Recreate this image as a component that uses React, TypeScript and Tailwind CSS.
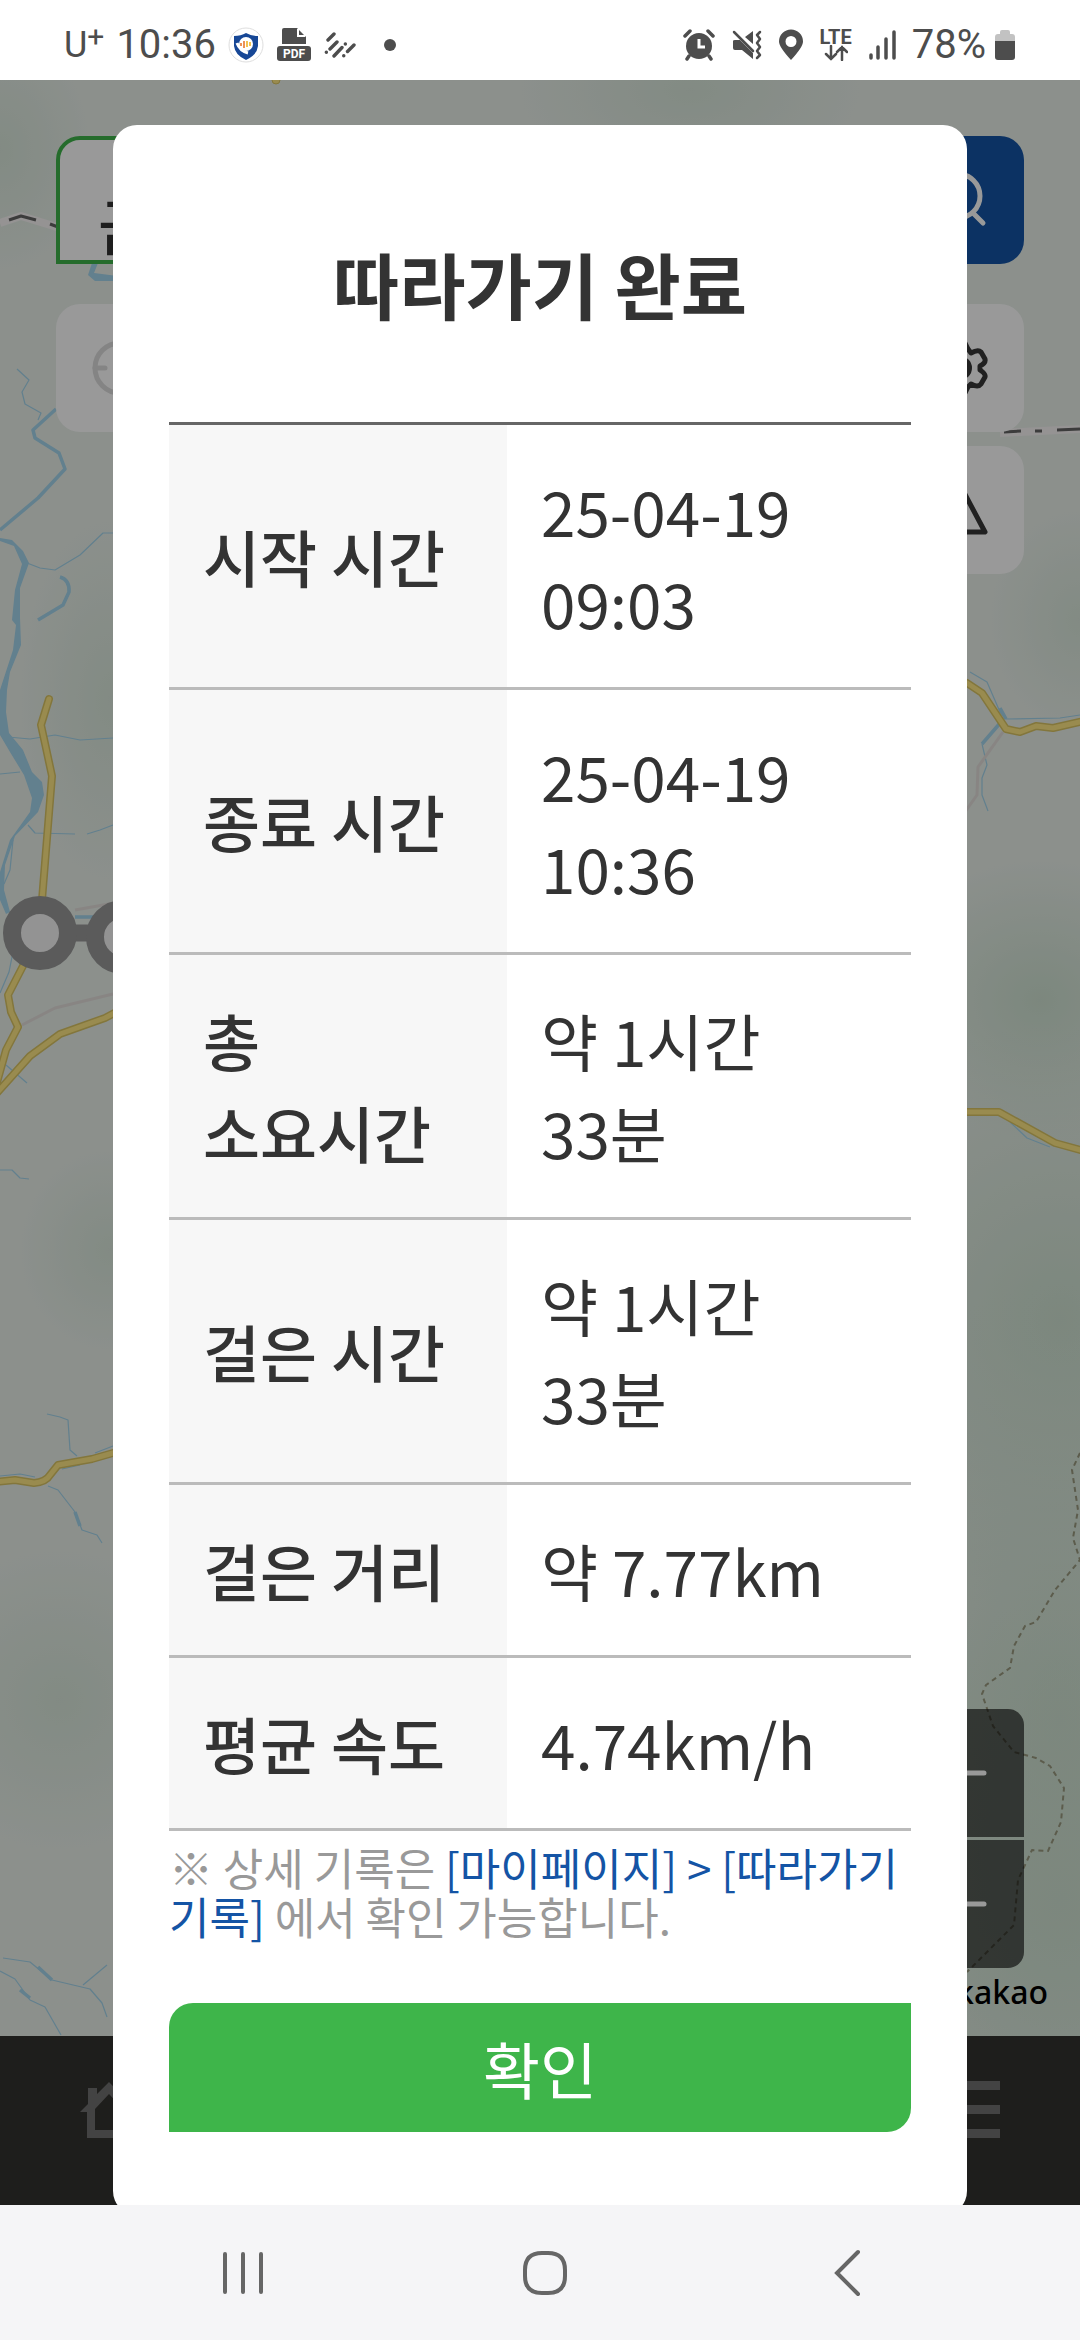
import React from 'react';

const RECORDS = [
    { label: '시작 시간', value: '25-04-19 09:03' },
    { label: '종료 시간', value: '25-04-19 10:36' },
    { label: '총 소요시간', value: '약 1시간 33분' },
    { label: '걸은 시간', value: '약 1시간 33분' },
    { label: '걸은 거리', value: '약 7.77km' },
    { label: '평균 속도', value: '4.74km/h' },
];

// Map geometry, in the coordinates of the map drawing
const STREAMS = [
    'M17 369L29 380L22 392L25 404L41 413L38 420',
    'M27 563L40 568L55 570L80 555L103 533L113 533',
    'M8 737L30 739L55 735L80 740L113 738',
    'M28 825L35 833L75 834M87 834L100 830L113 825',
    'M13 952L9 972L0 993M0 774L20 772M13 840L10 870L4 884',
    'M0 1170L12 1170L20 1178L29 1179M6 1065L27 1083',
    'M47 1414L60 1417L68 1420L70 1450L77 1456M0 1476L20 1474L35 1477M62 1469L80 1465M95 1453L113 1446',
    'M48 1486L58 1490L75 1512L82 1530L97 1535L102 1543',
    'M3 1958L30 1962L52 1980L90 1989L102 2003L107 2017M83 1985L107 1965',
    'M0 1971L15 1979L30 2000L45 2007L61 2035',
    'M970 672L987 682L1000 712L1006 719L1060 718L1080 715',
    'M982 744L987 765L982 778L982 795L988 811',
    'M1010 1122L1027 1138L1050 1147',
];

const RIVERS = [
    'M56 409L33 430L35 438L59 453L65 469L38 498L0 530',
    'M60 577Q70 580 69 592L63 605L38 620',
    'M75 917H95',
    'M1001 722L982 744M1000 708L1006 719',
    'M38 1967L52 1980M75 1512L80 1526M20 1990L30 1998',
];

const ROADS = [
    'M49 699L41 725L46 748L52 776L42 900',
    'M24 964L8 995L11 1012L18 1027L6 1050L-4 1086',
    'M-4 1094L30 1056L60 1034L105 1018L120 1010',
    'M-4 1482L15 1480L34 1483Q46 1482 50 1475L58 1465L92 1459L120 1451',
    'M950 677L967 683L982 693L1006 729L1020 732L1036 726L1053 728L1084 721',
    'M950 1112H999L1055 1143L1084 1151',
];

const MapDrawing: React.FC = () => (
    <svg
        className="absolute inset-0 h-full w-full"
        viewBox="0 80 1080 1956"
        preserveAspectRatio="xMidYMin slice"
        fill="none"
        strokeLinejoin="round"
        aria-hidden="true"
    >
        <defs>
            <radialGradient id="forest">
                <stop offset="0" stopColor="#cfe2d2" />
                <stop offset="1" stopColor="#cfe2d2" stopOpacity="0" />
            </radialGradient>
        </defs>
        <rect y="80" width="1080" height="1956" fill="#e9f0ea" />
        <g fill="url(#forest)" opacity="0.6">
            <ellipse cx="0" cy="150" rx="90" ry="120" />
            <ellipse cx="690" cy="90" rx="170" ry="90" />
            <ellipse cx="110" cy="700" rx="90" ry="180" />
            <ellipse cx="110" cy="1250" rx="90" ry="100" />
            <ellipse cx="60" cy="1700" rx="150" ry="150" />
            <ellipse cx="1080" cy="620" rx="90" ry="110" />
        </g>
        <g fill="url(#forest)">
            <ellipse cx="1040" cy="1000" rx="160" ry="140" />
            <ellipse cx="1060" cy="1320" rx="260" ry="300" />
            <ellipse cx="1060" cy="1720" rx="260" ry="440" />
            <ellipse cx="1060" cy="1900" rx="240" ry="300" />
        </g>

        <g stroke="#a3d5ed">
            <g strokeWidth="1.2">{STREAMS.map((d) => <path key={d} d={d} />)}</g>
            <g strokeWidth="3.5">{RIVERS.map((d) => <path key={d} d={d} />)}</g>
        </g>
        <path
            fill="#a3d5ed"
            d="M0 538L12 540L23 551L29 563L20 588L20 618L21 645L10 672L7 690L6 712L9 733L23 750L32 772L42 782L44 795L38 812L15 836L5 865L4 890L10 912L6 914L0 900V872L10 840L30 812L32 798L24 775L10 752L0 735V690L13 650L16 625L12 620L15 590L22 564L14 546L0 541Z"
        />
        <path fill="#a3d5ed" d="M92 263L88 275L95 281L125 281V277L94 273L98 263Z" />

        <g stroke="#e3dedb" strokeWidth="3">
            <path d="M22 1025L55 1008L113 994M75 910L120 902" />
            <path d="M1003 732L978 767L977 795L960 819" />
        </g>
        <g stroke="#dac564" strokeWidth="8" strokeLinecap="round">
            {ROADS.map((d) => <path key={d} d={d} />)}
        </g>
        <g stroke="#ffe884" strokeWidth="5" strokeLinecap="round">
            {ROADS.map((d) => <path key={d} d={d} />)}
        </g>
        <circle cx="276" cy="80" r="4" fill="#ffe884" stroke="#dac564" strokeWidth="1" />

        {/* Administrative borders */}
        <path d="M0 223L21 216L60 228M1000 433L1080 429" stroke="#f8f5f5" strokeWidth="8" />
        <path d="M9 220L21 216L36 220M50 224L58 227" stroke="#656565" strokeWidth="3" />
        <path d="M1004 432L1021 431M1035 431H1042M1057 430L1080 429" stroke="#656565" strokeWidth="3" />

        {/* Footpath */}
        <path
            d="M1080 1453L1072 1470L1078 1510L1073 1538L1080 1560L1055 1590L1036 1622L1025 1626L1014 1646L1010 1668L986 1685L982 1694L993 1726L1014 1752L1036 1758L1050 1766L1064 1788L1061 1822L1048 1851L1032 1850L1018 1880L1014 1925L967 1972"
            stroke="#99997f"
            strokeWidth="2"
            strokeDasharray="5 4"
        />

        {/* Walking course */}
        <path d="M70 933H95" stroke="#989898" strokeWidth="17" />
        <g fill="#f5f5f5" stroke="#989898" strokeWidth="18">
            <circle cx="40" cy="933" r="28" />
            <circle cx="123" cy="937" r="28" />
        </g>
    </svg>
);

const StatusBar: React.FC = () => (
    <header className="flex h-20 shrink-0 items-center justify-between bg-white px-16 pt-2.5 font-[Roboto,sans-serif] text-[40px] leading-[48px] text-[#4d4d4d]">
        <div className="flex items-center gap-3">
            <div className="flex items-start">
                <span className="text-4xl leading-[48px]">U</span>
                <span className="text-3xl leading-[32px]">+</span>
            </div>
            <span>10:36</span>
            <svg className="h-9 w-9" viewBox="0 0 36 36" aria-hidden="true">
                <circle cx="18" cy="18" r="17" fill="#fff" stroke="#dedede" />
                <path d="M18 6Q23 9 30 9V19Q29 28 18 33Q7 28 6 19V9Q13 9 18 6Z" fill="#174796" />
                <circle cx="18" cy="17" r="7" fill="#fff" />
                <path d="M9 16Q12 24 20 26" stroke="#fff" strokeWidth="3" fill="none" />
                <path d="M13 16V19M16 14V21" stroke="#e8772e" strokeWidth="1.6" />
                <path d="M19 14V20M22 15V19" stroke="#f0b429" strokeWidth="1.6" />
            </svg>
            <svg className="h-9 w-9" viewBox="0 0 36 36" aria-hidden="true">
                <path d="M6 3Q6 1 8 1H21L30 10V17H6Z" fill="#4d4d4d" />
                <path d="M22 2V9H29" fill="none" stroke="#fff" strokeWidth="2" />
                <rect x="1" y="19" width="34" height="15" rx="3" fill="#4d4d4d" />
                <text x="18" y="31" textAnchor="middle" fontSize="12" fontWeight="700" fill="#fff" fontFamily="Roboto, sans-serif">PDF</text>
            </svg>
            <svg className="h-8 w-8" viewBox="0 0 32 32" aria-hidden="true">
                <path
                    d="M4 11L10 5M2.300 23.300H2.400M6 20L13 13M10 27L18 18.500M21.300 15H21.400M19.700 26.700H19.800M23.500 22.500L30 16"
                    stroke="#4d4d4d"
                    strokeWidth="3.400"
                    strokeLinecap="round"
                />
            </svg>
            <span className="ml-4 h-3 w-3 rounded-full bg-[#4d4d4d]" />
        </div>

        <div className="flex items-center gap-4">
            <svg className="h-8 w-8" viewBox="0 0 32 32" aria-hidden="true">
                <circle cx="16" cy="17" r="13" fill="#4d4d4d" />
                <path d="M2 7L7 2M25 2L30 7M6 27L4 30M26 27L28 30" stroke="#4d4d4d" strokeWidth="3.500" strokeLinecap="round" />
                <path d="M16 10V18H22" fill="none" stroke="#fff" strokeWidth="3" />
            </svg>
            <svg className="h-8 w-8" viewBox="0 0 32 32" aria-hidden="true">
                <path d="M2 12Q2 11 4 11H9L12 14L22 24V30L11 21H4Q2 21 2 19ZM14 8L22 2V15Z" fill="#4d4d4d" />
                <path d="M3 3L22 22" stroke="#4d4d4d" strokeWidth="2.500" strokeLinecap="round" />
                <path d="M29 3L26 6L29 10L26 14L29 18L26 22L29 26L26 29" fill="none" stroke="#4d4d4d" strokeWidth="2.500" strokeLinecap="round" strokeLinejoin="round" />
            </svg>
            <svg className="h-8 w-6" viewBox="0 0 24 32" aria-hidden="true">
                <path d="M12 31Q0 18 0 12.500A12 12 0 0 1 24 12.500Q24 18 12 31ZM12 7A5.500 5.500 0 1 0 12 18A5.500 5.500 0 1 0 12 7Z" fill="#4d4d4d" fillRule="evenodd" />
            </svg>
            <div className="flex flex-col items-center">
                <span className="text-xl leading-4 font-bold">LTE</span>
                <svg className="h-4 w-6" viewBox="0 0 24 16" aria-hidden="true">
                    <path d="M7 1V14M2 9L7 14L12 9M18 15V2M13 7L18 2L23 7" fill="none" stroke="#4d4d4d" strokeWidth="2.500" strokeLinecap="round" />
                </svg>
            </div>
            <svg className="h-8 w-7" viewBox="0 0 28 32" aria-hidden="true">
                <path d="M3 26V29M10 18V29M18 10V29M26 3V29" stroke="#4d4d4d" strokeWidth="3.500" strokeLinecap="round" />
            </svg>
            <div className="flex items-center gap-2">
                <span>78%</span>
                <svg className="h-8 w-[22px]" viewBox="0 0 22 32" aria-hidden="true">
                    <path d="M1 13V8Q1 5 4 5H6V3Q6 1 8 1H14Q16 1 16 3V5H18Q21 5 21 8V13Z" fill="#c2c2c2" />
                    <path d="M1 12H21V28Q21 31 18 31H4Q1 31 1 28Z" fill="#4d4d4d" />
                </svg>
            </div>
        </div>
    </header>
);

const MapScreen: React.FC = () => (
    <div className="flex h-full flex-col" aria-hidden="true">
        <div className="relative flex min-h-0 flex-1 flex-col">
            <MapDrawing />
            <div className="relative px-14 pt-14">
                <form className="flex h-32">
                    <input
                        type="text"
                        aria-label="검색어"
                        defaultValue="금"
                        tabIndex={-1}
                        className="min-w-0 flex-1 rounded-tl-3xl border-4 border-[#3eb54a] bg-white pt-12 pl-[38px] text-[62px] leading-none font-medium text-[#333]"
                    />
                    <button type="button" aria-label="검색" tabIndex={-1} className="flex w-32 items-center justify-center rounded-r-3xl bg-[#1454a5]">
                        <svg className="h-14 w-14" viewBox="0 0 56 56" fill="none" stroke="#fff" strokeWidth="5" strokeLinecap="round">
                            <circle cx="26" cy="24" r="22" />
                            <path d="M41 41L51 51" />
                        </svg>
                    </button>
                </form>
                <div className="mt-10 flex items-start justify-between">
                    <button type="button" aria-label="현재 위치" tabIndex={-1} className="flex h-32 w-32 items-center justify-center rounded-3xl bg-white">
                        <svg className="h-14 w-14" viewBox="0 0 56 56" fill="none" stroke="#dddddd" strokeWidth="5" strokeLinecap="round">
                            <circle cx="28" cy="28" r="25" />
                            <path d="M3 28H13M43 28H53M28 3V13M28 43V53" />
                        </svg>
                    </button>
                    <div className="flex flex-col gap-3.5">
                        <button type="button" aria-label="설정" tabIndex={-1} className="flex h-32 w-32 items-center justify-center rounded-3xl bg-white">
                            <svg className="h-14 w-14" viewBox="0 0 56 56" fill="none" stroke="#383838" strokeWidth="5" strokeLinejoin="round">
                                <path d="M23 3H33L36 9L39 13Q46 9 49 12L53 19Q54 23 48 26V30Q54 34 53 37L49 44Q46 48 39 44L36 47L33 53H23L20 47L17 44Q10 48 7 44L3 37Q2 34 8 30V26Q2 23 3 19L7 12Q10 9 17 13L20 9Z" />
                                <circle cx="28" cy="28" r="9" strokeWidth="6" />
                            </svg>
                        </button>
                        <button type="button" aria-label="신고" tabIndex={-1} className="flex h-32 w-32 items-center justify-center rounded-3xl bg-white">
                            <svg className="h-14 w-14" viewBox="0 0 56 56" fill="none" stroke="#383838" strokeWidth="5" strokeLinejoin="round">
                                <path d="M28 3L53 50H3Z" />
                            </svg>
                        </button>
                    </div>
                </div>
            </div>
            <div className="relative mt-auto flex flex-col items-end gap-[3px] px-14">
                <button type="button" aria-label="확대" tabIndex={-1} className="flex h-32 w-32 items-center justify-center rounded-t-2xl bg-black/60">
                    <svg className="h-14 w-14" viewBox="0 0 56 56" stroke="#fff" strokeWidth="5" strokeLinecap="round">
                        <path d="M4 28H52M28 4V52" />
                    </svg>
                </button>
                <button type="button" aria-label="축소" tabIndex={-1} className="flex h-32 w-32 items-center justify-center rounded-b-2xl bg-black/60">
                    <svg className="h-14 w-14" viewBox="0 0 56 56" stroke="#fff" strokeWidth="5" strokeLinecap="round">
                        <path d="M4 28H52" />
                    </svg>
                </button>
            </div>
            <span className="relative self-end pr-8 pb-5 font-['Noto_Sans',sans-serif] text-[32px] leading-[48px] font-medium text-black">kakao</span>
        </div>
        <div className="flex h-[169px] shrink-0 items-start justify-between bg-[#33322f] px-20 pt-11">
            <svg className="h-[60px] w-[58px]" viewBox="0 0 58 60" fill="#707070">
                <path fillRule="evenodd" d="M29 2L58 32H51V58H7V32H0L8 24V8H17V14ZM29 14L15 29V50H43V29Z" />
            </svg>
            <svg className="h-[60px] w-14" viewBox="0 0 56 60" fill="#707070">
                <path d="M0 1H56V10H0ZM0 25H56V34H0ZM0 49H56V58H0Z" />
            </svg>
        </div>
    </div>
);

const ResultDialog: React.FC = () => (
    <section
        role="dialog"
        aria-labelledby="result-title"
        className="mx-[113px] mt-[45px] rounded-3xl bg-white px-14 pt-[104px] pb-[83px] break-keep text-[#333]"
    >
        <h1 id="result-title" className="text-center text-7xl leading-[108px] font-bold">따라가기 완료</h1>
        <table className="mt-[85px] w-full table-fixed border-separate border-spacing-0 border-t-[3px] border-[#666] text-[62px] leading-[92px]">
            <tbody>
                {RECORDS.map(({ label, value }) => (
                    <tr key={label}>
                        <th scope="row" className="w-[338px] border-b-[3px] border-[#bbb] bg-[#f7f7f7] px-[34px] py-[39px] text-left font-medium">
                            {label}
                        </th>
                        <td className="border-b-[3px] border-[#bbb] px-[34px] py-[39px]">{value}</td>
                    </tr>
                ))}
            </tbody>
        </table>
        <p className="mt-3 text-[44px] leading-[49px] text-[#999]">
            ※ 상세 기록은 <span className="text-[#1454a5]">[마이페이지] &gt; [따라가기 기록]</span> 에서 확인 가능합니다.
        </p>
        <button type="button" className="mt-[62px] flex h-[129px] w-full items-center justify-center rounded-tl-3xl rounded-br-3xl bg-[#3eb54a] text-[62px] leading-[92px] text-white">
            확인
        </button>
    </section>
);

const NavigationBar: React.FC = () => (
    <nav className="grid h-[135px] shrink-0 grid-cols-3 items-center justify-items-center bg-[#f5f5f7] pr-[82px] pl-[92px]">
        <button type="button" aria-label="최근 앱">
            <svg className="h-12 w-12" viewBox="0 0 48 48" stroke="#666" strokeWidth="4" strokeLinecap="round">
                <path d="M6 5V43M24 5V43M42 5V43" />
            </svg>
        </button>
        <button type="button" aria-label="홈">
            <svg className="h-12 w-12" viewBox="0 0 48 48" fill="none" stroke="#666" strokeWidth="4">
                <path d="M24 4H27Q44 4 44 21V27Q44 44 27 44H21Q4 44 4 27V21Q4 4 21 4Z" />
            </svg>
        </button>
        <button type="button" aria-label="뒤로">
            <svg className="h-12 w-12" viewBox="0 0 48 48" fill="none" stroke="#666" strokeWidth="4" strokeLinecap="round">
                <path d="M35 3L14 24L35 45" />
            </svg>
        </button>
    </nav>
);

export default function App() {
    return (
        <div className="flex h-screen flex-col bg-white font-['Noto_Sans_CJK_KR',sans-serif]">
            <StatusBar />
            <main className="relative min-h-0 flex-1 overflow-hidden">
                <MapScreen />
                <div className="absolute inset-0 overflow-hidden bg-black/40">
                    <ResultDialog />
                </div>
            </main>
            <NavigationBar />
        </div>
    );
}
